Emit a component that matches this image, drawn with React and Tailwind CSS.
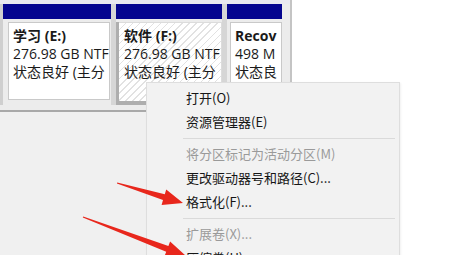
import React from 'react';

const font = { fontFamily: '"Open Sans", "Noto Sans CJK SC", sans-serif' };

const menuItems = [
  { label: '打开(O)' },
  { label: '资源管理器(E)' },
  { sep: true },
  { label: '将分区标记为活动分区(M)', disabled: true },
  { label: '更改驱动器号和路径(C)...' },
  { label: '格式化(F)...' },
  { sep: true },
  { label: '扩展卷(X)...', disabled: true },
  { label: '压缩卷(H)...' },
];

function PartitionText({ name, size, status }) {
  return (
    <div className="pt-[4px] pl-[4px] text-[14px] leading-[18px] text-[#1a1a1a] whitespace-nowrap overflow-hidden">
      <div className="font-bold">{name}</div>
      <div>{size}</div>
      <div>{status}</div>
    </div>
  );
}

function Arrows() {
  return (
    <svg className="absolute inset-0 pointer-events-none" width="475" height="255" viewBox="0 0 475 255">
      <polygon
        fill="#e8271c"
        points="116.9,183.5 163,200.1 161.6,204.9 183,203 166.2,189.5 164.8,194.3 117.2,182.5"
      />
      <polygon
        fill="#e8271c"
        points="82.8,217.5 166.2,251.7 164.5,256.4 186,256 170.1,241.4 168.4,246.1 83.2,216.5"
      />
    </svg>
  );
}

export default function App() {
  return (
    <div className="relative w-[475px] h-[255px] overflow-hidden bg-white" style={font}>
      {/* disk map */}
      <div className="flex">
        <div className="w-[292px] h-[112px] bg-[#ececec] border-r-2 border-[#c4c4c4] border-b-2 border-b-[#a9a9a9]">
          <div className="h-[4px] bg-[#e9e9f0]" />
          <div className="flex h-[101px] border-l-[3px] border-[#cfcfcf]">
            {/* E: */}
            <div className="w-[108px] flex flex-col">
              <div className="h-[15px] bg-[#05058f]" />
              <div className="mt-[3px] ml-[5px] mr-[1px] h-[78px] bg-white border border-[#c9c9c9]">
                <PartitionText name="学习 (E:)" size="276.98 GB NTF" status="状态良好 (主分" />
              </div>
            </div>
            <div className="w-[5px] bg-[#d6d6d6]" />
            {/* F: selected */}
            <div className="w-[106px] flex flex-col">
              <div className="h-[15px] bg-[#05058f]" />
              <div className="mt-[3px] h-[83px] border-l-[3px] border-b-[4px] border-[#aeaeae] bg-[repeating-linear-gradient(135deg,#e2e2e2_0px,#e2e2e2_1px,#ffffff_1px,#ffffff_5px)]">
                <div className="h-full border-t border-r border-[#dcdcdc] pl-[1px]">
                  <PartitionText name="软件 (F:)" size="276.98 GB NTF" status="状态良好 (主分" />
                </div>
              </div>
            </div>
            <div className="w-[5px] bg-[#d6d6d6]" />
            {/* Recovery */}
            <div className="w-[55px] flex flex-col">
              <div className="h-[15px] bg-[#05058f]" />
              <div className="mt-[3px] ml-[3px] h-[78px] bg-white border border-[#c9c9c9]">
                <PartitionText name="Recov" size="498 M" status="状态良" />
              </div>
            </div>
          </div>
        </div>
      </div>
      <div className="w-[292px] h-[143px] bg-[#f0f0f0]" />

      {/* context menu */}
      <div
        className="absolute left-[146px] top-[82px] w-[254px] bg-[#f2f2f2] border border-[#dedede] pt-[3px] pl-[2px] pr-[4px] shadow-[1px_1px_2px_rgba(0,0,0,0.06)]"
        style={{ fontFamily: '"Noto Sans CJK SC", "Open Sans", sans-serif' }}
      >
        {menuItems.map((item, i) =>
          item.sep ? (
            <div key={i} className="h-[8px] flex items-center pl-[34px]">
              <div className="h-px w-full bg-[#dadada]" />
            </div>
          ) : (
            <div
              key={i}
              className={`h-[24px] flex items-center pl-[37px] text-[13px] whitespace-nowrap ${
                item.disabled ? 'text-[#9a9a9a]' : 'text-[#161616]'
              }`}
            >
              {item.label}
            </div>
          )
        )}
      </div>

      <Arrows />
    </div>
  );
}
